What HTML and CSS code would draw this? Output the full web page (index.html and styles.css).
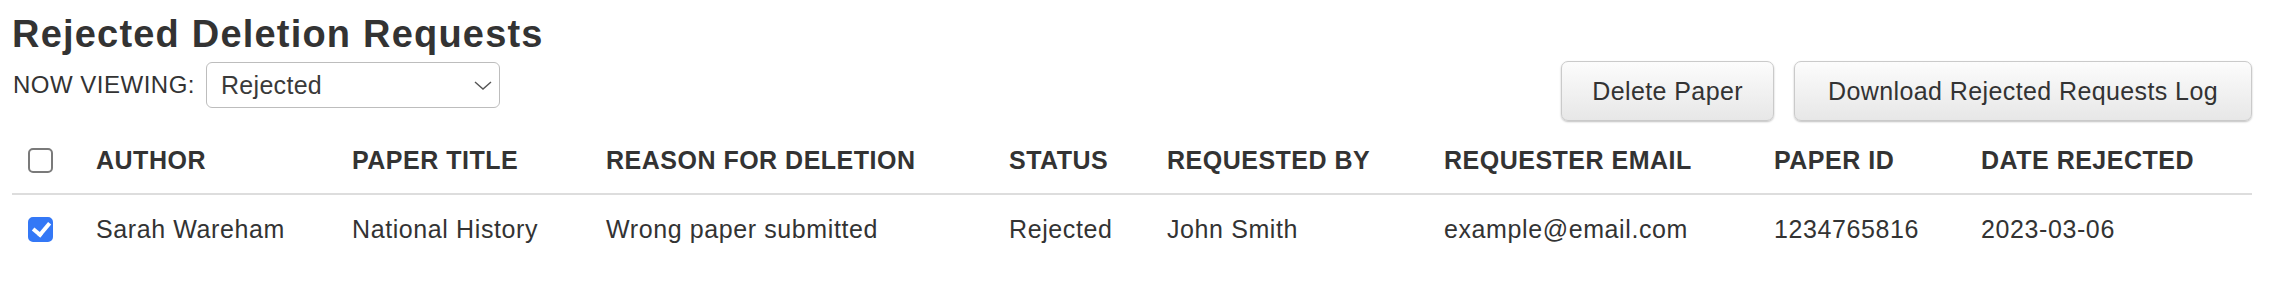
FILE: index.html
```html
<!DOCTYPE html>
<html lang="en">
<head>
  <meta charset="UTF-8">
  <meta name="viewport" content="width=device-width, initial-scale=1.0">
  <title>Rejected Deletion Requests</title>
  <link rel="stylesheet" href="styles.css">
</head>
<body>
  <div class="page">
    <h1>Rejected Deletion Requests</h1>

    <div class="bar">
      <div class="viewing">
        <label for="view">NOW VIEWING:</label>
        <span class="select-wrap">
          <select id="view" class="view-select">
            <option>Rejected</option>
            <option>Pending</option>
            <option>Approved</option>
          </select>
          <svg class="chevron" width="18" height="9" viewBox="0 0 18 9">
            <path d="M1 1 L9 8 L17 1" fill="none" stroke="#555" stroke-width="1.4"/>
          </svg>
        </span>
      </div>
      <div class="actions">
        <button type="button" class="btn btn-delete">Delete Paper</button>
        <button type="button" class="btn btn-log">Download Rejected Requests Log</button>
      </div>
    </div>

    <table class="requests">
      <colgroup>
        <col class="c-check">
        <col class="c-author">
        <col class="c-title">
        <col class="c-reason">
        <col class="c-status">
        <col class="c-by">
        <col class="c-email">
        <col class="c-id">
        <col class="c-date">
      </colgroup>
      <thead>
        <tr>
          <th class="check"><input type="checkbox" class="box"></th>
          <th>AUTHOR</th>
          <th>PAPER TITLE</th>
          <th>REASON FOR DELETION</th>
          <th>STATUS</th>
          <th>REQUESTED BY</th>
          <th>REQUESTER EMAIL</th>
          <th>PAPER ID</th>
          <th>DATE REJECTED</th>
        </tr>
      </thead>
      <tbody>
        <tr>
          <td class="check"><input type="checkbox" class="box" checked></td>
          <td>Sarah Wareham</td>
          <td>National History</td>
          <td>Wrong paper submitted</td>
          <td>Rejected</td>
          <td>John Smith</td>
          <td>example@email.com</td>
          <td>1234765816</td>
          <td>2023-03-06</td>
        </tr>
      </tbody>
    </table>
  </div>
</body>
</html>
```

FILE: styles.css
```css
body {
  margin: 0;
  background-color: #ffffff;
  font-family: "Liberation Sans", Arial, sans-serif;
  color: #333333;
}

.page {
  padding: 12px 26px 12px 12px;
}

h1 {
  margin: 0;
  font-size: 38px;
  line-height: 44px;
  letter-spacing: 1.2px;
  font-weight: bold;
  color: #333333;
}

.bar {
  display: flex;
  justify-content: space-between;
  align-items: flex-start;
  margin-top: 5px;
}

.viewing {
  display: flex;
  align-items: center;
  margin-top: 1px;
  font-size: 24px;
  letter-spacing: 0.5px;
}

.viewing label {
  margin-right: 11px;
  margin-left: 1px;
}

.select-wrap {
  position: relative;
  display: inline-block;
}

.view-select {
  appearance: none;
  -webkit-appearance: none;
  width: 294px;
  height: 46px;
  padding: 0 40px 0 14px;
  border: 1.5px solid #bdbdbd;
  border-radius: 6px;
  background-color: #ffffff;
  font-family: inherit;
  font-size: 25px;
  letter-spacing: 0.3px;
  color: #3a3a3a;
}

.chevron {
  position: absolute;
  right: 8px;
  top: 19px;
  pointer-events: none;
}

.actions {
  display: flex;
  gap: 20px;
}

.btn {
  height: 60px;
  padding: 0 30px;
  border: 1px solid #cacaca;
  border-radius: 7px;
  background: linear-gradient(#fcfcfc, #e7e7e7);
  box-shadow: 0 1px 2px rgba(0, 0, 0, 0.25);
  font-family: inherit;
  font-size: 25px;
  letter-spacing: 0.4px;
  color: #333333;
  cursor: pointer;
}

.btn-log {
  padding: 0 33px;
}

.requests {
  width: 100%;
  margin-top: 12px;
  border-collapse: collapse;
  table-layout: fixed;
  font-size: 25px;
}

.c-check { width: 84px; }
.c-author { width: 256px; }
.c-title { width: 254px; }
.c-reason { width: 403px; }
.c-status { width: 158px; }
.c-by { width: 277px; }
.c-email { width: 330px; }
.c-id { width: 207px; }
.c-date { width: 271px; }

.requests th {
  text-align: left;
  font-weight: bold;
  line-height: 28px;
  letter-spacing: 0.5px;
  padding: 13px 0 19px;
  border-bottom: 2px solid #dddddd;
  white-space: nowrap;
}

.requests td {
  line-height: 28px;
  letter-spacing: 0.6px;
  padding: 20px 0;
  white-space: nowrap;
}

.requests .check {
  padding-left: 16px;
}

.box {
  appearance: none;
  -webkit-appearance: none;
  position: relative;
  display: block;
  width: 25px;
  height: 25px;
  margin: 0;
  border: 2px solid #7a7a7a;
  border-radius: 5px;
  background-color: #ffffff;
}

.box:checked {
  border-color: #3478f6;
  background-color: #3478f6;
}

.box:checked::after {
  content: "";
  position: absolute;
  left: 6px;
  top: 0;
  width: 7px;
  height: 13px;
  border-right: 4px solid #ffffff;
  border-bottom: 4px solid #ffffff;
  transform: rotate(40deg);
}
```
